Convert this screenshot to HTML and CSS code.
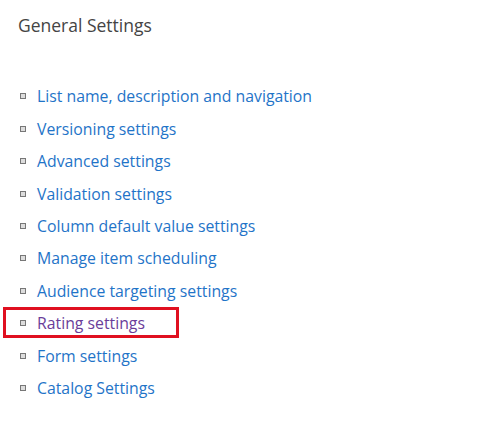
FILE: index.html
```html
<!DOCTYPE html>
<html lang="en">
<head>
    <meta charset="UTF-8">
    <title>General Settings</title>
    <link rel="stylesheet" href="styles.css">
</head>
<body>

    <h2 class="title">General Settings</h2>

    <!-- Settings links -->
    <ul class="settings">
        <li><a href="#">List name, description and navigation</a></li>
        <li><a href="#">Versioning settings</a></li>
        <li><a href="#">Advanced settings</a></li>
        <li><a href="#">Validation settings</a></li>
        <li><a href="#">Column default value settings</a></li>
        <li><a href="#">Manage item scheduling</a></li>
        <li><a href="#">Audience targeting settings</a></li>
        <li class="marked"><a href="#" class="visited">Rating settings</a></li>
        <li><a href="#">Form settings</a></li>
        <li><a href="#">Catalog Settings</a></li>
    </ul>

</body>
</html>
```

FILE: styles.css
```css
body {
    margin: 0;
    background: #fff;
    font-family: "Open Sans", "Noto Sans", sans-serif;
}
.title {
    margin: 0;
    padding: 13px 0 0 18px;
    font-size: 17.5px;
    font-weight: normal;
    color: #444;
    line-height: 24px;
}
.settings {
    list-style: none;
    margin: 0;
    padding: 43px 0 0 20px;
}
.settings li {
    display: flex;
    align-items: center;
    height: 32.45px;
}
/* small grey square bullet */
.settings li::before {
    content: "";
    width: 4px;
    height: 4px;
    border: 1px solid #777;
    background: #ddd;
    margin-right: 11px;
}
.settings a {
    color: #1f74c8;
    text-decoration: none;
    font-size: 15.8px;
}
.settings a.visited {
    color: #6a3d9a;
}
.marked {
    position: relative;
}
.marked::after {
    content: "";
    position: absolute;
    left: -17px;
    top: 0;
    width: 170px;
    height: 25px;
    border: 3px solid #e01020;
}
```
